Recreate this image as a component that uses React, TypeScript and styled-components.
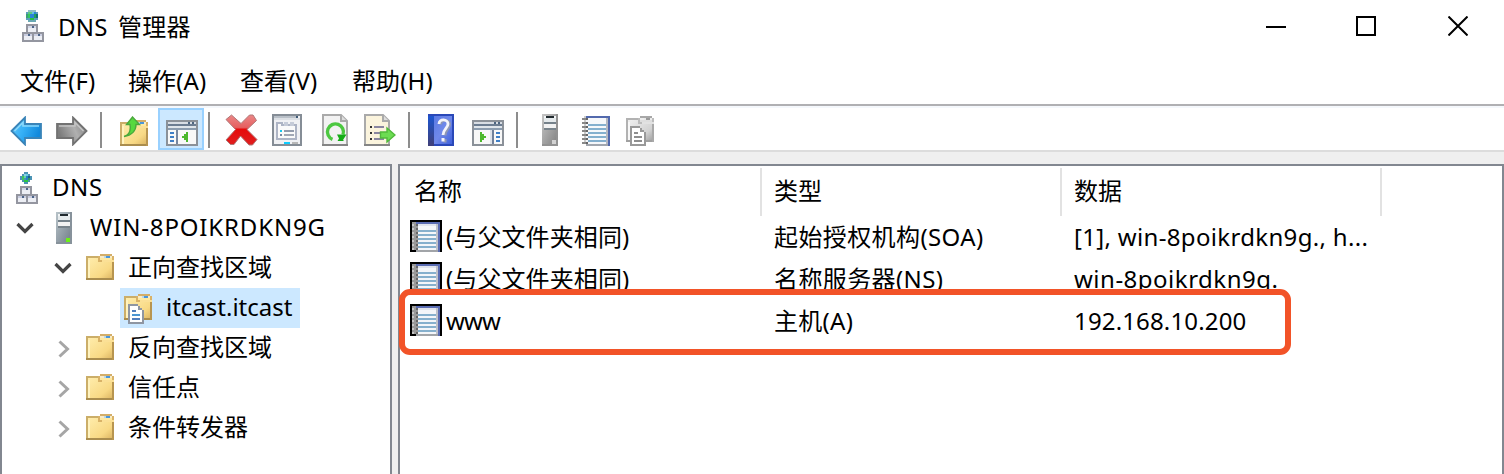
import React from "react";
import styled, { createGlobalStyle } from "styled-components";

const GlobalStyle = createGlobalStyle`
  html, body { margin: 0; padding: 0; background: #fff; }
  * { box-sizing: border-box; }
`;

const Window = styled.div`
  width: 1504px;
  height: 474px;
  overflow: hidden;
  display: flex;
  flex-direction: column;
  background: #fff;
  color: #000;
  font-family: "Noto Sans", "Noto Sans CJK SC", sans-serif;
  font-size: 24px;
  line-height: 32px;
  white-space: nowrap;
`;

const TitleBar = styled.header`
  height: 58px;
  flex: none;
  display: flex;
  align-items: flex-start;
  padding: 10px 36px 0 22px;
`;

const Label = styled.span<{ $track?: number }>`
  letter-spacing: ${(p) => p.$track ?? 0}px;
`;

const Title = styled.h1`
  margin: 1px auto 0 14px;
  font: inherit;
  letter-spacing: 0.3px;
  word-spacing: 3.5px;
`;

const Captions = styled.div`
  display: flex;
  margin-top: 6px;
`;

const Caption = styled.span<{ $gap: number }>`
  display: flex;
  margin-left: ${(p) => p.$gap}px;
`;

const MenuBar = styled.nav`
  height: 46px;
  flex: none;
  display: flex;
  padding: 7px 0 0 20px;
`;

const MenuItem = styled.span<{ $width: number }>`
  width: ${(p) => p.$width}px;
  letter-spacing: 0.1px;
`;

const Toolbar = styled.div`
  height: 48px;
  flex: none;
  display: flex;
  align-items: flex-end;
  padding: 0 0 4px 10px;
  border-top: 2px solid #b0b0b3;
  border-bottom: 2px solid #dcdcdc;
  background: linear-gradient(#f5f8fc 2px, #fff 2px);
`;

const Tool = styled.span<{ $gap: number }>`
  display: flex;
  margin-left: ${(p) => p.$gap}px;
`;

const ActiveTool = styled.span`
  display: flex;
  align-items: flex-end;
  width: 46px;
  height: 42px;
  margin: 0 0 -4px 10px;
  padding: 0 0 2px 6px;
  border: 2px solid #99d1ff;
  background: #cce8ff;
`;

const Separator = styled.span<{ $gap: number }>`
  width: 2px;
  height: 36px;
  margin: 0 0 -2px ${(p) => p.$gap}px;
  background: #8d8d8d;
`;

const Panes = styled.main`
  flex: 1;
  display: flex;
  gap: 6px;
  padding-top: 12px;
  background: #efefef;
`;

const TreePane = styled.aside`
  width: 392px;
  flex: none;
  padding-top: 2px;
  border: 2px solid #828790;
  border-bottom: 0;
  background: #fff;
`;

const TreeRow = styled.div<{ $indent: number }>`
  height: 40px;
  display: flex;
  align-items: flex-start;
  padding-left: ${(p) => p.$indent}px;
`;

const TreeLabel = styled(Label)`
  padding-top: 3px;
`;

const TreeIcon = styled.span<{ $width: number; $top: number }>`
  width: ${(p) => p.$width}px;
  padding-top: ${(p) => p.$top}px;
  display: flex;
`;

const Selected = styled.div`
  width: 180px;
  height: 40px;
  display: flex;
  align-items: flex-start;
  padding: 0 0 0 4px;
  background: #cce8ff;
`;

const ListPane = styled.section`
  position: relative;
  flex: 1;
  padding-top: 2px;
  border: 2px solid #828790;
  border-bottom: 0;
  background: #fff;
`;

const HeaderRow = styled.div`
  height: 48px;
  display: grid;
  grid-template-columns: 362px 300px 320px;
`;

const HeaderCell = styled.div<{ $inset: number }>`
  padding: 7px 0 0 ${(p) => p.$inset}px;
  border-right: 2px solid #e2e2e2;
`;

const Row = styled.div`
  height: 42px;
  display: grid;
  grid-template-columns: 374px 300px 310px;
  align-items: center;
`;

const NameCell = styled.div`
  display: flex;
  align-items: center;
  padding-left: 10px;
  gap: 4px;
  svg { margin-top: -2px; }
`;

const Highlight = styled.div`
  position: absolute;
  left: -1px;
  top: 123px;
  width: 892px;
  height: 66px;
  border: 6px solid #f25328;
  border-radius: 11px;
`;

type ArtProps = { w: number; h: number; children: React.ReactNode; smooth?: boolean };
const Art = ({ w, h, children, smooth }: ArtProps) => (
  <svg width={w} height={h} viewBox={`0 0 ${w} ${h}`} shapeRendering={smooth ? undefined : "crispEdges"}>
    {children}
  </svg>
);

const Box = ({ x, y, w, h, c }: { x: number; y: number; w: number; h: number; c: string }) => (
  <rect x={x} y={y} width={w} height={h} fill={c} />
);

const DnsIcon = ({ small }: { small?: boolean }) => (
  <Art w={22} h={32}>
    {small ? (
      <>
        <path d="M8 0h4v2h2v2h2v4h-2v2h-2v2h-4v-2h-2v-2h-2v-4h2v-2h2z" fill="#4a93b4" />
        <Box x={8} y={2} w={2} h={2} c="#8ad0e8" />
        <Box x={10} y={2} w={2} h={2} c="#66cfe0" />
        <Box x={6} y={4} w={2} h={4} c="#3fc45c" />
        <Box x={8} y={4} w={2} h={2} c="#67d8a4" />
        <Box x={10} y={4} w={2} h={4} c="#2383c6" />
        <Box x={12} y={4} w={2} h={2} c="#1b5c8c" />
        <Box x={8} y={8} w={4} h={2} c="#2cc840" />
        <Box x={12} y={6} w={2} h={2} c="#2b9c62" />
      </>
    ) : (
      <>
        <path d="M6 0h8v2h2v8h-2v2h-8v-2h-2v-8h2z" fill="#5b9cbd" />
        <Box x={6} y={0} w={8} h={2} c="#8fbcc6" />
        <Box x={6} y={2} w={4} h={2} c="#5dc87f" />
        <Box x={10} y={2} w={2} h={2} c="#63bfe4" />
        <Box x={12} y={2} w={2} h={2} c="#2a83d8" />
        <Box x={4} y={4} w={2} h={4} c="#3d9d78" />
        <Box x={6} y={4} w={2} h={4} c="#35c85d" />
        <Box x={8} y={4} w={4} h={4} c="#2a83d8" />
        <Box x={12} y={4} w={2} h={4} c="#1fa060" />
        <Box x={14} y={4} w={2} h={4} c="#0f6f72" />
        <Box x={8} y={8} w={4} h={2} c="#29c33c" />
        <Box x={6} y={10} w={8} h={2} c="#6aa9b4" />
      </>
    )}
    <Box x={4} y={14} w={12} h={8} c="#9496a0" />
    <Box x={6} y={16} w={8} h={6} c="#eceef4" />
    <Box x={6} y={16} w={8} h={2} c="#d2d8e8" />
    <Box x={10} y={16} w={2} h={2} c="#4c6488" />
    <Box x={0} y={22} w={22} h={10} c="#9496a0" />
    <Box x={2} y={24} w={8} h={6} c="#eceef4" />
    <Box x={12} y={24} w={8} h={6} c="#eceef4" />
    <Box x={2} y={24} w={8} h={2} c="#c9cde0" />
    <Box x={12} y={24} w={8} h={2} c="#c9cde0" />
    <Box x={6} y={24} w={2} h={2} c="#4c6488" />
    <Box x={16} y={24} w={2} h={2} c="#4c6488" />
  </Art>
);

const ArrowIcon = ({ back }: { back?: boolean }) => {
  const id = back ? "back" : "fwd";
  return (
    <Art w={32} h={30} smooth>
      <defs>
        <linearGradient id={id} x1="0" x2="1" y1="0" y2="0.4">
          <stop offset="0" stopColor={back ? "#66c8fa" : "#787878"} />
          <stop offset="0.5" stopColor={back ? "#36b0f6" : "#b0b0b0"} />
          <stop offset="1" stopColor={back ? "#1289dc" : "#7c7c7c"} />
        </linearGradient>
      </defs>
      <g transform={back ? undefined : "translate(32 0) scale(-1 1)"}>
        <path d="M1.500 15 15 1.500V8h16v14H15v6.500z" fill={`url(#${id})`} stroke={back ? "#3a84b8" : "#727272"} strokeWidth={1.8} />
        <path d="M4.500 15 13 6.500V10h16" fill="none" stroke={back ? "#8bd8fa" : "#c4c4c4"} strokeWidth={1.6} />
      </g>
    </Art>
  );
};

const folderGradient = (id: string, gray?: boolean) => (
  <linearGradient id={id} x1="0" y1="0" x2="1" y2="1">
    <stop offset="0" stopColor={gray ? "#f0f0f0" : "#ffedac"} />
    <stop offset="0.7" stopColor={gray ? "#d2d2d2" : "#f8d985"} />
    <stop offset="1" stopColor={gray ? "#a6a6a6" : "#deb866"} />
  </linearGradient>
);

const FolderShape = ({ id, gray }: { id: string; gray?: boolean }) => (
  <>
    <defs>{folderGradient(id, gray)}</defs>
    <Box x={0} y={2} w={28} h={24} c={gray ? "#b2b2b2" : "#cbae69"} />
    <Box x={2} y={4} w={24} h={20} c={`url(#${id})`} />
    <Box x={2} y={6} w={2} h={18} c={gray ? "#f8f8f8" : "#fff3bf"} />
    <Box x={12} y={2} w={16} h={6} c={gray ? "#bcbcbc" : "#d9b267"} />
    <Box x={14} y={0} w={12} h={2} c={gray ? "#a8a8a8" : "#d4ae68"} />
    <Box x={14} y={2} w={12} h={2} c={gray ? "#ededed" : "#f7ebc8"} />
    <Box x={20} y={2} w={4} h={2} c={gray ? "#999" : "#4a96da"} />
    <Box x={18} y={2} w={2} h={2} c={gray ? "#e8e8e8" : "#b7d8e9"} />
    <Box x={14} y={4} w={12} h={2} c={gray ? "#dedede" : "#ffe99f"} />
    <Box x={16} y={6} w={12} h={2} c={gray ? "#e2e2e2" : "#fbe096"} />
    <Box x={0} y={24} w={28} h={2} c={gray ? "#a0a0a0" : "#aa8d4e"} />
    <Box x={26} y={8} w={2} h={18} c={gray ? "#a9a9a9" : "#b89550"} />
  </>
);

const FolderIcon = ({ id }: { id: string }) => (
  <Art w={28} h={26}><FolderShape id={id} /></Art>
);

const ZoneIcon = ({ id, gray }: { id: string; gray?: boolean }) => (
  <Art w={28} h={30}>
    <FolderShape id={id} gray={gray} />
    <path d="M4 10h10v2h2v2h2v2h2v14h-16z" fill={gray ? "#999" : "#8f96a2"} />
    <path d="M6 12h8v4h4v12h-12z" fill="#fff" />
    <Box x={8} y={16} w={4} h={2} c={gray ? "#8e8e8e" : "#527fbd"} />
    <Box x={8} y={20} w={8} h={2} c={gray ? "#8e8e8e" : "#4b96d2"} />
    <Box x={8} y={24} w={8} h={2} c={gray ? "#8e8e8e" : "#527fbd"} />
  </Art>
);

const FolderUpIcon = () => (
  <Art w={28} h={30} smooth>
    <g transform="translate(0 4)" shapeRendering="crispEdges">
      <FolderShape id="up" />
    </g>
    <path d="M4 20.500c5-1.500 7-6 6-12H6.500L12.500 1l7 7.500H16c0 6-4 11-12 12z" fill="#56d83e" stroke="#4aa83c" strokeWidth={1.400} />
  </Art>
);

const PaneIcon = ({ right }: { right?: boolean }) => (
  <Art w={32} h={26}>
    <Box x={0} y={0} w={32} h={26} c="#8b9199" />
    <Box x={2} y={2} w={28} h={2} c="#d8dde4" />
    <Box x={2} y={4} w={28} h={2} c="#6c7d92" />
    <Box x={22} y={2} w={2} h={2} c="#4d6580" />
    <Box x={26} y={2} w={2} h={2} c="#4d6580" />
    <Box x={2} y={6} w={28} h={2} c="#dfe5eb" />
    <Box x={2} y={8} w={28} h={2} c="#8b9caf" />
    <Box x={2} y={10} w={28} h={14} c="#f8f8f8" />
    {right ? (
      <>
        <Box x={20} y={10} w={2} h={14} c="#6f809b" />
        <Box x={18} y={10} w={2} h={14} c="#dce1e8" />
        <path d="M8 12h2v2h2v2h2v2h-2v2h-2v2h-2z" fill="#4cb82c" />
      </>
    ) : (
      <>
        <Box x={10} y={10} w={2} h={14} c="#7787a0" />
        <path d="M22 12v10h-2v-2h-2v-2h-2v-2h2v-2h2v-2z" fill="#4cb82c" />
      </>
    )}
    {[12, 16, 20].map((y) => <Box key={y} x={right ? 24 : 4} y={y} w={4} h={2} c="#3f7fc7" />)}
  </Art>
);

const DeleteIcon = () => (
  <Art w={34} h={32} smooth>
    <defs>
      <linearGradient id="del" gradientUnits="userSpaceOnUse" x1="0" y1="0" x2="0" y2="32">
        <stop offset="0" stopColor="#ec8a8a" /><stop offset="0.42" stopColor="#e56060" />
        <stop offset="0.48" stopColor="#e60b0b" /><stop offset="1" stopColor="#df2020" />
      </linearGradient>
    </defs>
    <path
      d="M6.500 1 16 9.500 24.500 1H28l3.500 5.500L22 15.500 32 25.500 27.500 31H24L15.500 22 9 30.500H5.500L1 26 10.500 15.500 1 5.500z"
      fill="url(#del)" stroke="#b07878" strokeWidth={1} strokeLinejoin="round"
    />
  </Art>
);

const PropertiesIcon = () => (
  <Art w={30} h={32}>
    <Box x={0} y={0} w={30} h={32} c="#858d96" />
    <Box x={2} y={2} w={26} h={28} c="#f0f1f4" />
    <Box x={2} y={2} w={22} h={2} c="#b9c0c8" />
    <Box x={24} y={2} w={2} h={2} c="#405b78" />
    <Box x={2} y={4} w={26} h={2} c="#dce0e5" />
    <path d="M5 25V9h5v2h14v14z" fill="#fafafa" stroke="#adb4c5" strokeWidth={2} />
    <Box x={12} y={8} w={4} h={4} c="#c5cbd8" />
    <Box x={18} y={8} w={4} h={4} c="#c5cbd8" />
    <Box x={8} y={16} w={2} h={2} c="#18c9ef" />
    <Box x={12} y={16} w={10} h={2} c="#929bac" />
    <Box x={8} y={20} w={2} h={2} c="#7588a2" />
    <Box x={12} y={20} w={10} h={2} c="#a1a8b5" />
    <Box x={12} y={28} w={6} h={2} c="#0dccff" />
    <Box x={20} y={28} w={6} h={2} c="#b7b7b7" />
  </Art>
);

const PageShape = ({ fill }: { fill: string }) => (
  <>
    <path d="M1 1h18l6 6v24H1z" fill={fill} stroke="#aaa" strokeWidth={2} />
    <path d="M19 1v6h6" fill="#ddd" stroke="#aaa" strokeWidth={2} />
    <path d="M0 31h26" stroke="#858585" strokeWidth={2} />
  </>
);

const RefreshIcon = () => (
  <Art w={26} h={32} smooth>
    <PageShape fill="#f2f2f2" />
    <path d="M10.500 25.300A8 8 0 1 1 21 20.500" fill="none" stroke="#4cc840" strokeWidth={3.400} />
    <path d="M15 20.500h9.500L21 26l1 1h-6.500l1.500-2.500z" fill="#14ac16" />
  </Art>
);

const ExportIcon = () => (
  <Art w={32} h={32} smooth>
    <PageShape fill="#fbf4dd" />
    {[12, 18, 24].map((y) => (
      <React.Fragment key={y}>
        <Box x={6} y={y} w={2} h={2} c="#333" />
        <Box x={10} y={y} w={10} h={2} c="#8985a0" />
      </React.Fragment>
    ))}
    <path d="M16.500 18H23v-4l8 7-8 7v-4h-6.500z" fill="#6cdc52" stroke="#50b93b" strokeWidth={1.4} />
  </Art>
);

const HelpIcon = () => (
  <Art w={26} h={32} smooth>
    <defs>
      <linearGradient id="help" x1="0" y1="0" x2="1" y2="1">
        <stop stopColor="#5b7ae4" /><stop offset="0.5" stopColor="#7089ea" /><stop offset="1" stopColor="#3f60da" />
      </linearGradient>
      <linearGradient id="spine" x1="0" y1="0" x2="0" y2="1">
        <stop stopColor="#1c55d0" /><stop offset="1" stopColor="#403f78" />
      </linearGradient>
    </defs>
    <Box x={0} y={0} w={26} h={32} c="#2a48b8" />
    <Box x={0} y={2} w={6} h={30} c="url(#spine)" />
    <Box x={6} y={2} w={18} h={28} c="url(#help)" />
    <path d="M11.500 10c0-6 9.500-5 9 0 0 4-4.500 5-4.500 11M16 24.500v3.500" fill="none" stroke="#8e97b4" strokeWidth={3} transform="translate(1 .5)" />
    <path d="M11 10c0-6 9-5 9 0 0 4-5 5-5 11" fill="none" stroke="#f4f4fb" strokeWidth={2.800} />
    <Box x={13.5} y={24} w={3} h={3.5} c="#f4f4fb" />
  </Art>
);

const ServerIcon = ({ color }: { color?: boolean }) => {
  const id = color ? "srvc" : "srvg";
  return (
    <Art w={16} h={32}>
      <defs>
        <linearGradient id={id} x1="0" y1="0" x2="1" y2="1">
          <stop stopColor={color ? "#b9c4ca" : "#c6c6c6"} /><stop offset="1" stopColor={color ? "#75818c" : "#858585"} />
        </linearGradient>
      </defs>
      <Box x={0} y={0} w={16} h={32} c={color ? "#87929b" : "#929292"} />
      <Box x={0} y={0} w={14} h={30} c={`url(#${id})`} />
      <Box x={2} y={2} w={12} h={2} c="#f2f5f6" />
      <Box x={4} y={2} w={8} h={2} c="#20292e" />
      <Box x={2} y={4} w={12} h={4} c="#e5eaec" />
      <Box x={2} y={8} w={12} h={2} c="#75818a" />
      <Box x={2} y={10} w={12} h={4} c="#f2f2f2" />
      <Box x={2} y={14} w={12} h={2} c="#78838b" />
      <Box x={10} y={26} w={4} h={4} c={color ? "#6bf116" : "#d2d2d2"} />
    </Art>
  );
};

const NotebookIcon = () => (
  <Art w={28} h={30}>
    <Box x={4} y={0} w={24} h={30} c="#5269ad" />
    <Box x={4} y={2} w={22} h={28} c="#b4b8c2" />
    <Box x={4} y={2} w={20} h={26} c="#f5f7fa" />
    {[8, 12, 16, 20, 24].map((y) => <Box key={y} x={6} y={y} w={18} h={2} c="#83afce" />)}
    <Box x={4} y={28} w={22} h={2} c="#a1a6ae" />
    {[2, 6, 10, 14, 18, 22, 26].map((y) => (
      <React.Fragment key={y}>
        <Box x={0} y={y} w={4} h={2} c="#888" />
        <Box x={2} y={y - 2} w={2} h={2} c="#ccc" />
        <Box x={4} y={y} w={2} h={2} c="#666" />
      </React.Fragment>
    ))}
  </Art>
);

const RecordIcon = () => (
  <Art w={32} h={32}>
    <Box x={0} y={0} w={32} h={32} c="#000" />
    <Box x={2} y={2} w={28} h={28} c="#999" />
    <Box x={6} y={2} w={24} h={2} c="#5a6cb2" />
    <Box x={28} y={2} w={2} h={30} c="#5a6cb2" />
    <Box x={8} y={4} w={18} h={26} c="#f4f6f9" />
    <Box x={8} y={4} w={20} h={2} c="#dfe3ed" />
    <Box x={26} y={4} w={2} h={26} c="#bfc2ca" />
    {[10, 14, 18, 22, 26].map((y) => <Box key={y} x={8} y={y} w={18} h={2} c="#86b0cd" />)}
    {[4, 8, 12, 16, 20, 24, 28].map((y) => (
      <React.Fragment key={y}>
        <Box x={2} y={y} w={2} h={2} c="#c7c7c7" />
        <Box x={6} y={y} w={2} h={2} c="#666" />
      </React.Fragment>
    ))}
    <Box x={6} y={30} w={22} h={2} c="#a1a4a8" />
  </Art>
);

const ChevronDown = () => (
  <Art w={18} h={12} smooth><path d="M1.500 2 9 9.500 16.500 2" fill="none" stroke="#454545" strokeWidth={3.200} /></Art>
);
const ChevronRight = () => (
  <Art w={12} h={18} smooth><path d="M1.500 1.500 9.500 9 1.500 16.500" fill="none" stroke="#a6a6a6" strokeWidth={3} /></Art>
);

const records = [
  { name: "(与父文件夹相同)", type: "起始授权机构(SOA)", data: "[1], win-8poikrdkn9g., h...", nameTrack: 0.1, typeTrack: 0.4, track: 0.33 },
  { name: "(与父文件夹相同)", type: "名称服务器(NS)", data: "win-8poikrdkn9g.", nameTrack: 0.1, typeTrack: 0.4, track: 0.5 },
  { name: "www", type: "主机(A)", data: "192.168.10.200", nameTrack: -0.9, typeTrack: 0.3, track: 0.15 },
];

export default function App() {
  return (
    <Window>
      <GlobalStyle />
      <TitleBar>
        <DnsIcon />
        <Title>DNS 管理器</Title>
        <Captions>
          <Caption $gap={0}><Art w={20} h={20}><Box x={0} y={10} w={20} h={2} c="#000" /></Art></Caption>
          <Caption $gap={70}><Art w={20} h={20}><rect x={1} y={1} width={18} height={18} fill="none" stroke="#000" strokeWidth={2} /></Art></Caption>
          <Caption $gap={72}><Art w={20} h={20} smooth><path d="M.5.5l19 19M19.500.5l-19 19" stroke="#000" strokeWidth={2} /></Art></Caption>
        </Captions>
      </TitleBar>
      <MenuBar>
        <MenuItem $width={108}>文件(F)</MenuItem>
        <MenuItem $width={112}>操作(A)</MenuItem>
        <MenuItem $width={112}>查看(V)</MenuItem>
        <MenuItem $width={90}>帮助(H)</MenuItem>
      </MenuBar>
      <Toolbar>
        <Tool $gap={0}><ArrowIcon back /></Tool>
        <Tool $gap={14}><ArrowIcon /></Tool>
        <Separator $gap={12} />
        <Tool $gap={18}><FolderUpIcon /></Tool>
        <ActiveTool><PaneIcon /></ActiveTool>
        <Separator $gap={4} />
        <Tool $gap={15}><DeleteIcon /></Tool>
        <Tool $gap={13}><PropertiesIcon /></Tool>
        <Tool $gap={20}><RefreshIcon /></Tool>
        <Tool $gap={16}><ExportIcon /></Tool>
        <Separator $gap={12} />
        <Tool $gap={18}><HelpIcon /></Tool>
        <Tool $gap={18}><PaneIcon right /></Tool>
        <Separator $gap={12} />
        <Tool $gap={24}><ServerIcon /></Tool>
        <Tool $gap={24}><NotebookIcon /></Tool>
        <Tool $gap={16}><ZoneIcon id="zg" gray /></Tool>
      </Toolbar>
      <Panes>
        <TreePane>
          <TreeRow $indent={14}>
            <TreeIcon $width={36} $top={4}><DnsIcon small /></TreeIcon>
            <TreeLabel $track={0.6}>DNS</TreeLabel>
          </TreeRow>
          <TreeRow $indent={14}>
            <TreeIcon $width={40} $top={14}><ChevronDown /></TreeIcon>
            <TreeIcon $width={34} $top={4}><ServerIcon color /></TreeIcon>
            <TreeLabel $track={0.85}>WIN-8POIKRDKN9G</TreeLabel>
          </TreeRow>
          <TreeRow $indent={52}>
            <TreeIcon $width={32} $top={14}><ChevronDown /></TreeIcon>
            <TreeIcon $width={42} $top={6}><FolderIcon id="f1" /></TreeIcon>
            <TreeLabel>正向查找区域</TreeLabel>
          </TreeRow>
          <TreeRow $indent={118}>
            <Selected>
              <TreeIcon $width={42} $top={6}><ZoneIcon id="z1" /></TreeIcon>
              <TreeLabel>itcast.itcast</TreeLabel>
            </Selected>
          </TreeRow>
          {["反向查找区域", "信任点", "条件转发器"].map((name, i) => (
            <TreeRow key={name} $indent={56}>
              <TreeIcon $width={28} $top={12}><ChevronRight /></TreeIcon>
              <TreeIcon $width={42} $top={6}><FolderIcon id={`c${i}`} /></TreeIcon>
              <TreeLabel>{name}</TreeLabel>
            </TreeRow>
          ))}
        </TreePane>
        <ListPane>
          <HeaderRow>
            <HeaderCell $inset={14}>名称</HeaderCell>
            <HeaderCell $inset={12}>类型</HeaderCell>
            <HeaderCell $inset={12}>数据</HeaderCell>
          </HeaderRow>
          {records.map((r, i) => (
            <Row key={i}>
              <NameCell><RecordIcon /><Label $track={r.nameTrack}>{r.name}</Label></NameCell>
              <Label $track={r.typeTrack}>{r.type}</Label>
              <Label $track={r.track}>{r.data}</Label>
            </Row>
          ))}
          <Highlight />
        </ListPane>
      </Panes>
    </Window>
  );
}
